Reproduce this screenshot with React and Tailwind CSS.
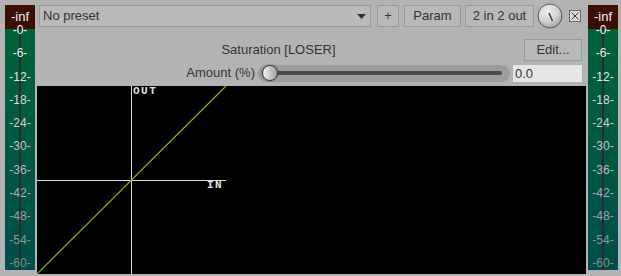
import React from 'react';

const marks = [
  { t: '-0-', c: 'text-[#f4f4f4]' },
  { t: '-6-', c: 'text-[#eeeeee]' },
  { t: '-12-', c: 'text-[#e4e4e4]' },
  { t: '-18-', c: 'text-[#dadada]' },
  { t: '-24-', c: 'text-[#d0d0d0]' },
  { t: '-30-', c: 'text-[#c4c4c4]' },
  { t: '-36-', c: 'text-[#b8b8b8]' },
  { t: '-42-', c: 'text-[#acacac]' },
  { t: '-48-', c: 'text-[#a0a0a0]' },
  { t: '-54-', c: 'text-[#949494]' },
  { t: '-60-', c: 'text-[#8a8a8a]' },
];

function Meter() {
  return (
    <div className="relative w-[30px] h-[265px] flex flex-col shrink-0">
      <div className="h-[24px] bg-[#3c0f06] text-[13px] leading-[24px] text-[#f2f2f2] text-center">-inf</div>
      <div className="relative flex-1 bg-gradient-to-b from-[#006238] to-[#004d4b]">
        <div className="absolute left-[14px] top-0 bottom-0 w-[2px] bg-[#2b2b2b]" />
      </div>
      <div className="absolute left-0 right-0 top-[18px] bottom-0 flex flex-col justify-between items-center">
        {marks.map((m) => (
          <span key={m.t} className={`h-[14px] leading-[14px] text-[12px] ${m.c}`}>{m.t}</span>
        ))}
      </div>
    </div>
  );
}

function Btn({ children, className = '' }) {
  return (
    <div className={`h-[22px] flex items-center justify-center border border-[#9a9a9a] bg-[#b8b8b8] text-[#333] text-[13px] ${className}`}>
      {children}
    </div>
  );
}

export default function App() {
  return (
    <div className="w-[621px] h-[276px] bg-[#b3b3b3] flex pt-[5px] pl-[5px] overflow-hidden" style={{ fontFamily: '"Liberation Sans", Arial, sans-serif' }}>
      <Meter />

      <div className="w-[549px] ml-[2px] flex flex-col">
        {/* top row */}
        <div className="h-[22px] flex items-center pl-[2px]">
          <div className="w-[332px] h-[22px] flex items-center justify-between border border-[#9a9a9a] bg-[#bababa] pl-[3px] pr-[4px] text-[13px] text-[#333]">
            <span>No preset</span>
            <svg width="9" height="5" viewBox="0 0 9 5"><path d="M0 0 H9 L4.5 5 Z" fill="#333" /></svg>
          </div>
          <Btn className="w-[22px] ml-[6px]">+</Btn>
          <Btn className="w-[57px] ml-[5px]">Param</Btn>
          <Btn className="w-[69px] ml-[4px]">2 in 2 out</Btn>
          <svg className="ml-[3px]" width="26" height="26" viewBox="0 0 26 26">
            <defs>
              <radialGradient id="kn" cx="0.4" cy="0.3" r="0.75">
                <stop offset="0" stopColor="#f0f0f0" />
                <stop offset="0.6" stopColor="#d0d0d0" />
                <stop offset="1" stopColor="#9a9a9a" />
              </radialGradient>
            </defs>
            <circle cx="13" cy="13" r="12" fill="url(#kn)" stroke="#5a5a5a" strokeWidth="1" />
            <line x1="12" y1="10" x2="15.5" y2="18" stroke="#333" strokeWidth="1.4" />
          </svg>
          <svg className="ml-[6px]" width="12" height="12" viewBox="0 0 12 12">
            <rect x="0.5" y="0.5" width="11" height="11" fill="#dcdcdc" stroke="#6a6a6a" />
            <path d="M2.5 2.5 L9.5 9.5 M9.5 2.5 L2.5 9.5" stroke="#333" strokeWidth="1" />
          </svg>
        </div>

        {/* title row */}
        <div className="h-[22px] mt-[12px] flex items-center pr-[4px]">
          <div className="flex-1 text-center text-[13px] text-[#333]">Saturation [LOSER]</div>
          <Btn className="w-[58px] ml-[4px]">Edit...</Btn>
        </div>

        {/* slider row */}
        <div className="h-[18px] mt-[3px] flex items-center">
          <div className="w-[218px] text-right text-[13px] text-[#333]">Amount (%)</div>
          <div className="relative w-[252px] h-[17px] ml-[3px] rounded-full bg-[#9c9c9c] flex items-center">
            <div className="absolute left-[12px] right-[8px] h-[4px] rounded-full bg-[#4a4a4a]" />
            <div className="absolute left-[4px] w-[16px] h-[16px] rounded-full border border-[#3a3a3a] bg-gradient-to-r from-[#f4f4f4] via-[#c8c8c8] to-[#a89ca0] shadow-[0_0_2px_#555]" />
          </div>
          <div className="w-[69px] h-[17px] ml-[3px] bg-[#e6e6e6] text-[13px] leading-[17px] text-[#333] pl-[2px]">0.0</div>
        </div>

        {/* graph */}
        <div className="h-[188px] mt-[4px] bg-black">
          <svg width="549" height="188" viewBox="0 0 549 188">
            <line x1="94.5" y1="0" x2="94.5" y2="188" stroke="#dcdcdc" strokeWidth="1" />
            <line x1="0" y1="94.5" x2="189" y2="94.5" stroke="#dcdcdc" strokeWidth="1" />
            <line x1="0" y1="188" x2="189" y2="0" stroke="#7cbf00" strokeWidth="1.2" />
            <text x="96" y="8" fill="#e0e0e0" fontSize="11" fontWeight="bold" letterSpacing="1.5" fontFamily='"Liberation Mono", monospace'>OUT</text>
            <text x="170" y="102" fill="#e0e0e0" fontSize="11" fontWeight="bold" letterSpacing="1.5" fontFamily='"Liberation Mono", monospace'>IN</text>
          </svg>
        </div>
      </div>

      <div className="ml-[2px]">
        <Meter />
      </div>
    </div>
  );
}
